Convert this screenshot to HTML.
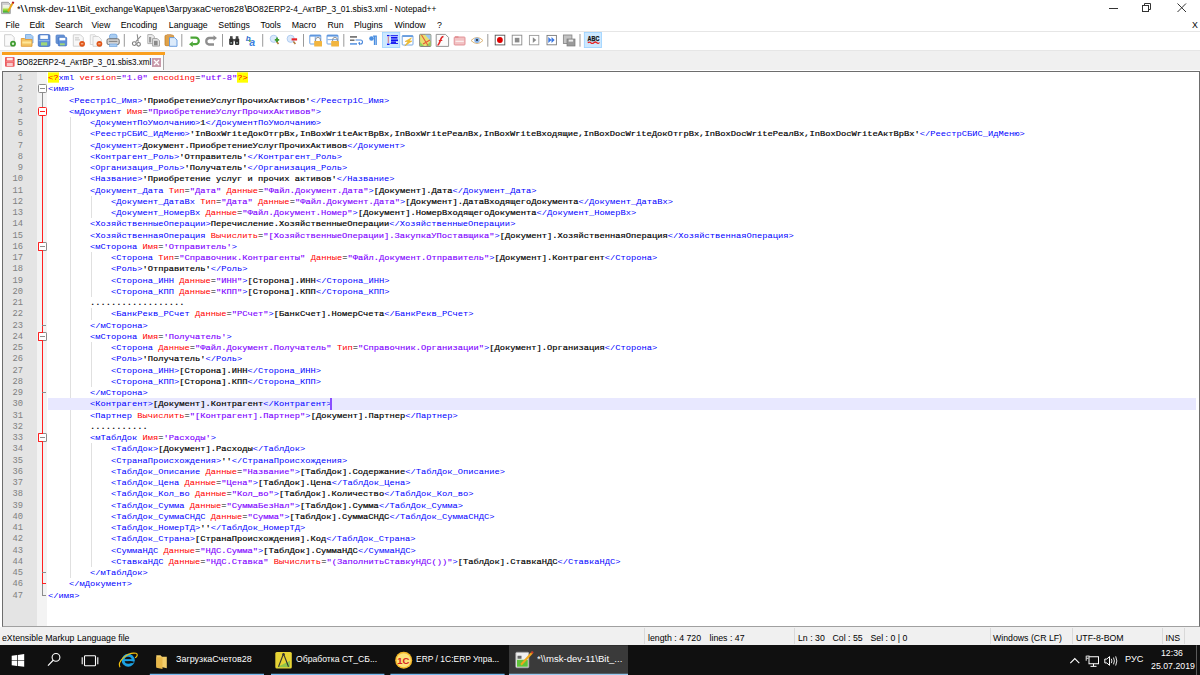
<!DOCTYPE html>
<html><head><meta charset="utf-8">
<style>
*{margin:0;padding:0;box-sizing:border-box}
html,body{width:1200px;height:675px;overflow:hidden;background:#fff;position:relative;font-family:"Liberation Sans",sans-serif;color:#000}
.abs{position:absolute}
.t{position:absolute;white-space:pre;line-height:0;font-size:8.75px}
.ttl{top:8.6px;font-size:8.85px}
.bs{display:inline-block;font-weight:normal;width:3.75px;text-align:center;transform:scaleX(1.3)}
.menu{top:24.5px}
#tb{position:absolute;left:0;top:31px;width:1200px;height:20px;background:#fff;border-top:1px solid #e6e6e6;border-bottom:1px solid #e6e6e6}
#tabbar{position:absolute;left:0;top:51px;width:1200px;height:18.6px;background:#f0f0f0}
#tab{position:absolute;left:1.5px;top:1.25px;width:162.5px;height:17.4px;background:#fcfcfc;border-right:1px solid #a8a8a8}
#tab .or{position:absolute;left:0;top:0;width:163px;height:3px;background:#fa9f1e}
#editor{position:absolute;left:2px;top:71px;width:1198px;height:556px;background:#fff;border:1px solid #6d6d6d;border-bottom-color:#a0a0a0;overflow:hidden}
#gut{position:absolute;left:0;top:0;width:33.6px;height:100%;background:#e4e4e4}
#fold{position:absolute;left:33.6px;top:0;width:10.6px;height:100%;background:#f3f3f3}
#code{position:absolute;left:-3px;top:-72px;width:1200px;height:700px}
.ln{position:absolute;left:48px;height:11.25px;width:1148px;white-space:pre;font-family:"Liberation Mono",monospace;font-size:8.75px;line-height:11.25px;padding-top:1.1px}
.ln i{font-style:normal}
.tx{display:inline-block;transform:scaleY(0.86);transform-origin:0 7.6px}
.cur{background:#e8e8ff}
.t_{color:#0000ff}
i.tg{color:#0000ff}
i.a{color:#ff0000}
i.v{color:#8000ff;-webkit-text-stroke:0.14px #8000ff}
i.d{color:#000;-webkit-text-stroke:0.2px #000}
i.eq{color:#000}
i.xs{color:#ff0000;background:#ffff00;display:inline-block;height:12.8px;margin-top:-2.5px;padding-top:2.5px;vertical-align:top}
.num{position:absolute;left:0;width:23px;padding-top:1.1px;text-align:right;font-family:"Liberation Mono",monospace;font-size:8.75px;line-height:11.25px;color:#808080}
.ig{position:absolute;width:1px;height:11.25px;background:#e0e0e0}
#status{position:absolute;left:0;top:627px;width:1200px;height:18px;background:#f0f0f0}
.st{top:10.7px;font-size:8.75px}
.sd{position:absolute;top:1px;width:1px;height:16px;background:#d9d9d9}
#task{position:absolute;left:0;top:644.5px;width:1200px;height:30.5px;background:#101010}
.tt{color:#fff}
.ul{position:absolute;top:28.5px;height:2px;background:#76b9ed}
</style></head><body>
<!-- title bar -->
<svg class="abs" style="left:0;top:0" width="16" height="16" viewBox="0 0 16 16">
<defs><linearGradient id="npg" x1="0" y1="0" x2="0" y2="1"><stop offset="0" stop-color="#f4f4f4"/><stop offset="0.35" stop-color="#e9f5d0"/><stop offset="0.6" stop-color="#9fdc3c"/><stop offset="1" stop-color="#2aa32a"/></linearGradient></defs>
<path d="M1.6 2.3 H8.3 L10.3 4.3 V13.6 H1.6 Z" fill="#d0d0d0" stroke="#9a9a9a" stroke-width="0.9"/>
<rect x="2.9" y="5" width="6.6" height="7.6" fill="url(#npg)"/>
<path d="M8 11.5 L12.8 3" stroke="#eaa51a" stroke-width="1.9"/>
<path d="M12.5 3.3 L13.6 1.9" stroke="#b0101a" stroke-width="1.9"/>
</svg>
<div class="t ttl" style="left:17.3px;transform:scaleX(1.045);transform-origin:0 0">*<span class="bs">\</span><span class="bs">\</span>msk-dev-11<span class="bs">\</span></div>
<div class="t ttl" style="left:80.0px;transform:scaleX(0.986);transform-origin:0 0">Bit_exchange<span class="bs">\</span></div>
<div class="t ttl" style="left:136.3px;transform:scaleX(0.983);transform-origin:0 0">Карцев<span class="bs">\</span></div>
<div class="t ttl" style="left:168.8px;transform:scaleX(1.003);transform-origin:0 0">ЗагрузкаСчетов28<span class="bs">\</span></div>
<div class="t ttl" style="left:247.2px;transform:scaleX(0.948);transform-origin:0 0">BO82ERP2-4_АктВР_3_01.sbis3.xml - Notepad++</div>
<div class="abs" style="left:1108.5px;top:7.5px;width:9px;height:1px;background:#333"></div>
<svg class="abs" style="left:1142px;top:3px" width="10" height="10" viewBox="0 0 10 10"><rect x="0.5" y="2.5" width="6" height="6" fill="none" stroke="#333" stroke-width="1"/><path d="M2.5 2.5 V0.5 H8.5 V6.5 H6.5" fill="none" stroke="#333" stroke-width="1"/></svg>
<svg class="abs" style="left:1176.5px;top:3px" width="10" height="10" viewBox="0 0 10 10"><path d="M0.5 0.5 L9 9 M9 0.5 L0.5 9" stroke="#333" stroke-width="1"/></svg>
<!-- menu -->
<div class="t menu" style="left:5.5px">File</div>
<div class="t menu" style="left:29.4px">Edit</div>
<div class="t menu" style="left:55px">Search</div>
<div class="t menu" style="left:91.4px">View</div>
<div class="t menu" style="left:120.7px">Encoding</div>
<div class="t menu" style="left:168.8px">Language</div>
<div class="t menu" style="left:218.3px">Settings</div>
<div class="t menu" style="left:260.5px">Tools</div>
<div class="t menu" style="left:291.7px">Macro</div>
<div class="t menu" style="left:327.5px">Run</div>
<div class="t menu" style="left:354px">Plugins</div>
<div class="t menu" style="left:394.5px">Window</div>
<div class="t menu" style="left:437px">?</div>
<div class="t menu" style="left:1192px">X</div>
<!-- toolbar -->
<div id="tb"></div>
<!--ICONS-->
<svg class="abs" style="left:0;top:0" width="610" height="51" viewBox="0 0 610 51">
<!-- new -->
<path d="M4.6 34.7 H11.5 L14.2 37.4 V46.2 H4.6 Z" fill="#fafafa" stroke="#cfcfcf" stroke-width="1"/>
<circle cx="13" cy="43.7" r="2.9" fill="#3c9a2e"/><circle cx="13" cy="43.7" r="1.2" fill="#d8f0d0"/>
<!-- open -->
<path d="M25.5 34.5 H31 L33 36.5 V43 H25.5 Z" fill="#a9cdf2" stroke="#6fa3e0" stroke-width="0.8"/>
<path d="M21.3 38.5 H24.5 L25.5 39.5 H32 V46.3 H21.3 Z" fill="#f3c462" stroke="#e09a38" stroke-width="0.9"/>
<rect x="22.3" y="41.5" width="9" height="2" fill="#ffe79a"/>
<!-- save -->
<rect x="38.3" y="34.6" width="11.6" height="11.8" rx="1.2" fill="#5b8ed8" stroke="#3f6fc0" stroke-width="0.8"/>
<rect x="40.3" y="35.3" width="7.6" height="3.6" fill="#ffffff"/>
<rect x="41" y="42.3" width="6.2" height="3.2" fill="#9fd67a"/>
<rect x="38.8" y="40" width="10.6" height="1.2" fill="#8fb5ea"/>
<!-- save all -->
<rect x="56" y="35" width="8.5" height="8.5" rx="1" fill="#6d98d8" stroke="#4f7cc4" stroke-width="0.7"/>
<rect x="58.2" y="37.2" width="8.5" height="8.7" rx="1" fill="#5b8ed8" stroke="#3f6fc0" stroke-width="0.7"/>
<rect x="59.5" y="37.8" width="5.8" height="2.6" fill="#fff"/>
<rect x="60" y="43.3" width="4.8" height="2" fill="#9fd67a"/>
<!-- close -->
<path d="M73.3 34.8 H80.5 L83.3 37.6 V46.2 H73.3 Z" fill="#f7f7f7" stroke="#d0d0d0" stroke-width="1"/>
<rect x="75" y="37.5" width="4" height="0.8" fill="#bbb"/><rect x="75" y="39.5" width="5" height="0.8" fill="#bbb"/>
<circle cx="82.1" cy="43.8" r="2.9" fill="#e0561a"/><rect x="80.9" y="43.4" width="2.4" height="0.9" fill="#fde0c8"/>
<!-- close all -->
<path d="M90.3 34.8 H95 L97 36.8 V44.5 H90.3 Z" fill="#f7f7f7" stroke="#d4d4d4" stroke-width="0.9"/>
<path d="M93 36.5 H98.5 L101.3 39.3 V46.3 H93 Z" fill="#f7f7f7" stroke="#d0d0d0" stroke-width="0.9"/>
<circle cx="99.4" cy="43.8" r="2.9" fill="#e0561a"/><rect x="98.2" y="43.4" width="2.4" height="0.9" fill="#fde0c8"/>
<!-- print -->
<rect x="109.5" y="34.2" width="7.5" height="5" rx="2" fill="#a9cdf2" stroke="#6fa3e0" stroke-width="0.8"/>
<rect x="107" y="38.8" width="12.2" height="5.7" rx="1.5" fill="#d9d9d9" stroke="#606060" stroke-width="0.9"/>
<rect x="108.8" y="40.8" width="8.6" height="1.3" fill="#8a8a8a"/>
<rect x="109.5" y="44" width="7.5" height="2.5" fill="#a9cdf2" stroke="#6fa3e0" stroke-width="0.7"/>
<!-- separators -->
<g fill="#9a9a9a">
<rect x="123.8" y="34" width="1" height="12.7"/>
<rect x="181.3" y="34" width="1" height="12.7"/>
<rect x="222" y="34" width="1" height="12.7"/>
<rect x="262.2" y="34" width="1" height="12.7"/>
<rect x="303" y="34" width="1" height="12.7"/>
<rect x="343.3" y="34" width="1" height="12.7"/>
<rect x="487.3" y="34" width="1" height="12.7"/>
<rect x="579.5" y="34" width="1" height="12.7"/>
</g>
<!-- cut -->
<path d="M137.2 34.3 L138.2 41.8 M141 36 L135.8 41.6" stroke="#8a8a8a" stroke-width="1.1" fill="none"/>
<circle cx="134.3" cy="43.6" r="1.9" fill="none" stroke="#7a7a7a" stroke-width="1.1"/>
<circle cx="138.6" cy="44.3" r="1.8" fill="none" stroke="#7a7a7a" stroke-width="1.1"/>
<!-- copy -->
<path d="M147.8 34.6 H152.3 L154.3 36.6 V43.6 H147.8 Z" fill="#ececec" stroke="#a8a8a8" stroke-width="0.9"/>
<rect x="149" y="37" width="2.2" height="5.5" fill="#9a9a9a"/>
<path d="M152.6 38.6 H157.3 L159.5 40.8 V46.1 H152.6 Z" fill="#e4e4e4" stroke="#9c9c9c" stroke-width="0.9"/>
<rect x="154" y="40.8" width="3.6" height="4.5" fill="#8a8a8a"/>
<!-- paste -->
<rect x="165" y="35.2" width="8.6" height="10.5" rx="1" fill="#e0a248" stroke="#c07f2a" stroke-width="0.8"/>
<rect x="167" y="34.2" width="4.5" height="2" fill="#d6a060"/>
<path d="M169.5 37.6 H174.5 L177 40 V46.3 H169.5 Z" fill="#dcebfb" stroke="#5f97df" stroke-width="0.9"/>
<!-- undo -->
<path d="M190.5 37.6 H195.5 A3.3 3.3 0 0 1 195.5 44.2 H192.5" fill="none" stroke="#4aa536" stroke-width="2.2"/>
<path d="M189 44.2 L192.8 41.3 V47 Z" fill="#4aa536"/>
<!-- redo -->
<path d="M214 38 H209 A3.3 3.3 0 0 0 209 44.5 H214" fill="none" stroke="#8e8e8e" stroke-width="2.3"/>
<path d="M217 38 L213.5 35.3 V40.7 Z" fill="#8e8e8e"/>
<!-- find -->
<rect x="229.2" y="38.5" width="4.2" height="6.4" rx="0.8" fill="#2f2f2f"/>
<rect x="235" y="38.5" width="4.2" height="6.4" rx="0.8" fill="#2f2f2f"/>
<rect x="230" y="36.2" width="2.6" height="3" fill="#444"/><rect x="235.8" y="36.2" width="2.6" height="3" fill="#444"/>
<rect x="233" y="39" width="2.3" height="2.3" fill="#555"/>
<rect x="230.5" y="42" width="1.5" height="1.6" fill="#9aa"/><rect x="236.3" y="42" width="1.5" height="1.6" fill="#9aa"/>
<!-- replace -->
<text x="245.8" y="40.6" font-family="Liberation Sans" font-style="italic" font-weight="bold" font-size="8" fill="#2f6fd0">b</text>
<text x="249.2" y="46.4" font-family="Liberation Sans" font-style="italic" font-weight="bold" font-size="10.5" fill="#3a80e0">a</text>
<circle cx="249.8" cy="40.8" r="1.1" fill="#5cae4a"/>
<!-- zoom in -->
<circle cx="273.8" cy="38.8" r="3.6" fill="#dbe9fb" stroke="#a9c8ef" stroke-width="0.9"/>
<path d="M276.5 41.5 L278.5 44" stroke="#b07a3e" stroke-width="1.6"/>
<path d="M277 37.5 V42 M274.8 39.8 H279.2" stroke="#3d9a2e" stroke-width="1.8"/>
<!-- zoom out -->
<circle cx="290.7" cy="38.8" r="3.6" fill="#dbe9fb" stroke="#a9c8ef" stroke-width="0.9"/>
<path d="M293.4 41.5 L295.4 44" stroke="#b07a3e" stroke-width="1.6"/>
<rect x="291.6" y="38.3" width="5.5" height="2.2" fill="#e8242a"/>
<!-- sync v -->
<rect x="309.8" y="35" width="11" height="9" rx="0.8" fill="#fff" stroke="#5f97df" stroke-width="0.9"/>
<rect x="309.8" y="35" width="11" height="1.6" fill="#5f97df"/>
<rect x="314.8" y="36.5" width="0.8" height="7" fill="#5f97df"/>
<path d="M315.6 41 V39.8 A2.4 2.4 0 0 1 320.4 39.8 V41" fill="none" stroke="#888" stroke-width="0.9"/>
<rect x="314.2" y="41" width="7.8" height="5.5" rx="0.5" fill="#f2b53f"/>
<!-- sync h -->
<rect x="327" y="35" width="11" height="9" rx="0.8" fill="#fff" stroke="#5f97df" stroke-width="0.9"/>
<rect x="327" y="35" width="11" height="1.6" fill="#5f97df"/>
<rect x="327.5" y="39.3" width="10" height="0.8" fill="#5f97df"/>
<path d="M332.6 41 V39.8 A2.4 2.4 0 0 1 337.4 39.8 V41" fill="none" stroke="#888" stroke-width="0.9"/>
<rect x="331.2" y="41" width="7.8" height="5.5" rx="0.5" fill="#f2b53f"/>
<!-- word wrap -->
<rect x="350" y="36" width="7" height="1.8" fill="#7a7a7a"/>
<rect x="350" y="39.6" width="4.5" height="1.1" fill="#3a3a3a"/>
<rect x="350" y="43" width="7" height="1.8" fill="#6fa3e6"/>
<path d="M355.5 40 H360.5 A2 2 0 0 1 360.5 44 H359" fill="none" stroke="#4a88dc" stroke-width="1.1"/>
<path d="M358 43 L360 45.5 L360 41.8 Z" fill="#4a88dc"/>
<!-- pilcrow -->
<path d="M373 36.2 H376.2 V45 M374.5 36.2 V45" stroke="#4a8ee0" stroke-width="1.3" fill="none"/>
<circle cx="371.5" cy="38.5" r="2.3" fill="#4a8ee0"/>
<!-- pressed indent guide -->
<rect x="382.5" y="32.3" width="17.3" height="15.2" fill="#cce8ff" stroke="#99d1ff" stroke-width="0.8"/>
<g fill="#1010f0">
<rect x="387" y="35" width="2.5" height="1.2"/><rect x="390.5" y="35.2" width="7.5" height="1"/>
<rect x="391" y="37" width="6.5" height="1.6"/><rect x="391" y="39.4" width="7" height="1.8"/>
<rect x="391" y="41.5" width="5" height="1.4"/><rect x="390.5" y="43" width="7.5" height="0.9"/>
<rect x="387" y="43.6" width="2.5" height="1.4"/>
</g>
<rect x="387.8" y="36.5" width="0.9" height="6.5" fill="#e06070"/>
<!-- udl -->
<rect x="402.2" y="35.5" width="10.8" height="9.5" rx="0.8" fill="#fff" stroke="#6a9edf" stroke-width="0.9"/>
<rect x="402.2" y="35.5" width="10.8" height="1.5" fill="#6a9edf"/>
<path d="M411.5 37.8 L405 41.5 H408 L404.8 46 L412 41 H409.3 L411.5 37.8 Z" fill="#f0c030" stroke="#e0a820" stroke-width="0.5"/>
<!-- doc map -->
<rect x="419.6" y="34.3" width="11.3" height="12.2" rx="0.8" fill="#e8e070" stroke="#7a7a7a" stroke-width="0.9"/>
<path d="M425 34.8 H430.5 V41 Z" fill="#9cc8f0"/>
<path d="M420 42 L424 46 H420 Z M426 46 L430.5 41.5 V46 Z" fill="#8fd060"/>
<path d="M421.5 35 L428 45.5 M423 44 L430 40" fill="none" stroke="#e45a3a" stroke-width="1.1"/>
<!-- function list -->
<path d="M436.2 34.4 H445.5 L448.6 37.5 V46.4 H436.2 Z" fill="#fbfbfb" stroke="#8a8a8a" stroke-width="0.9"/>
<path d="M437.5 45.2 C439 45 439.5 43 440.5 40 C441.3 37.5 442 36.5 443.5 36.5" fill="none" stroke="#e02828" stroke-width="1.6"/>
<path d="M438.8 40.5 H442.3" stroke="#e02828" stroke-width="1"/>
<!-- folder workspace -->
<rect x="454.2" y="37" width="10.8" height="8" rx="0.8" fill="#f2c2c4" stroke="#e08a8e" stroke-width="0.9"/>
<rect x="455" y="36.3" width="3.5" height="1.5" fill="#e08a8e"/>
<rect x="455.5" y="40.8" width="8.3" height="0.9" fill="#fff"/>
<!-- eye -->
<path d="M471 40.5 Q477 34.5 483 40.5 Q477 46.5 471 40.5 Z" fill="#fff" stroke="#d8b070" stroke-width="0.9"/>
<circle cx="477" cy="40.2" r="2.7" fill="#8ab4e8"/>
<circle cx="477" cy="40" r="0.9" fill="#111"/>
<!-- record -->
<rect x="495.2" y="35.2" width="9.6" height="9.7" fill="#fff" stroke="#555" stroke-width="0.9"/>
<circle cx="499.9" cy="40" r="2.9" fill="#dd0000"/>
<!-- stop -->
<rect x="512.2" y="35.2" width="9.6" height="9.7" fill="#fff" stroke="#8a8a8a" stroke-width="0.9"/>
<rect x="514.8" y="37.8" width="4.6" height="4.6" fill="#8a8a8a"/>
<!-- play -->
<rect x="529.4" y="35.4" width="9.4" height="9.4" fill="#fff" stroke="#9a9a9a" stroke-width="0.9"/>
<path d="M532.8 37.3 L536.3 40.1 L532.8 42.9 Z" fill="#8a8a8a"/>
<!-- ff -->
<rect x="547" y="35.4" width="9.4" height="9.4" fill="#fff" stroke="#7a7a7a" stroke-width="0.9"/>
<path d="M548.3 37 L551.5 40 L548.3 43 Z M551.5 37 L554.7 40 L551.5 43 Z" fill="#3b78e2"/>
<!-- save macro -->
<rect x="563.4" y="35" width="8.5" height="8.5" fill="#c4c4c4" stroke="#8a8a8a" stroke-width="0.9"/>
<rect x="567" y="39" width="8" height="7" fill="#9a9a9a" stroke="#7a7a7a" stroke-width="0.7"/>
<rect x="568.7" y="39.6" width="4.4" height="2" fill="#ececec"/>
<!-- spell -->
<rect x="584.3" y="32.4" width="17.2" height="15.2" fill="#cce8ff" stroke="#99d1ff" stroke-width="0.8"/>
<text x="587.6" y="41.2" font-family="Liberation Sans" font-weight="bold" font-size="6.6" fill="#111" stroke="#111" stroke-width="0.25" textLength="11.8" lengthAdjust="spacingAndGlyphs">ABC</text>
<path d="M587.8 42.8 Q589.3 41.3 590.8 42.7 T593.8 42.7 T596.8 42.7 T599.5 42.5" fill="none" stroke="#e82020" stroke-width="1.2"/>
</svg>
<!--/ICONS-->
<!-- tab bar -->
<div id="tabbar"><div id="tab"><div class="or"></div>
<svg class="abs" style="left:3px;top:4.75px" width="10" height="10" viewBox="0 0 10 10"><rect x="0" y="0" width="9.6" height="9.8" rx="1" fill="#ec5a5e"/><rect x="1.8" y="0.8" width="6" height="2.6" fill="#fde8e8"/><rect x="1.8" y="5.8" width="6" height="3.2" fill="#f9c9ca"/><rect x="0.8" y="4.2" width="8" height="0.9" fill="#f58a8d"/></svg>
<div class="t" style="left:15.5px;top:9.8px;font-size:9.6px;transform:scaleX(0.835);transform-origin:0 0">BO82ERP2-4_АктВР_3_01.sbis3.xml</div>
<svg class="abs" style="left:150.5px;top:5.5px" width="9" height="9" viewBox="0 0 9 9"><rect x="0" y="0" width="9" height="9" fill="#c99aaa"/><path d="M2 2 L7 7 M7 2 L2 7" stroke="#fff" stroke-width="1.3"/></svg>
</div></div>
<!-- editor -->
<div id="editor">
<div id="gut"></div>
<div id="fold"></div>
<div id="code">
<div class="ig" style="left:70.00px;top:117.00px"></div>
<div class="ig" style="left:70.00px;top:128.25px"></div>
<div class="ig" style="left:70.00px;top:139.50px"></div>
<div class="ig" style="left:70.00px;top:150.75px"></div>
<div class="ig" style="left:70.00px;top:162.00px"></div>
<div class="ig" style="left:70.00px;top:173.25px"></div>
<div class="ig" style="left:70.00px;top:184.50px"></div>
<div class="ig" style="left:70.00px;top:195.75px"></div>
<div class="ig" style="left:91.00px;top:195.75px"></div>
<div class="ig" style="left:70.00px;top:207.00px"></div>
<div class="ig" style="left:91.00px;top:207.00px"></div>
<div class="ig" style="left:70.00px;top:218.25px"></div>
<div class="ig" style="left:70.00px;top:229.50px"></div>
<div class="ig" style="left:70.00px;top:240.75px"></div>
<div class="ig" style="left:70.00px;top:252.00px"></div>
<div class="ig" style="left:91.00px;top:252.00px"></div>
<div class="ig" style="left:70.00px;top:263.25px"></div>
<div class="ig" style="left:91.00px;top:263.25px"></div>
<div class="ig" style="left:70.00px;top:274.50px"></div>
<div class="ig" style="left:91.00px;top:274.50px"></div>
<div class="ig" style="left:70.00px;top:285.75px"></div>
<div class="ig" style="left:91.00px;top:285.75px"></div>
<div class="ig" style="left:70.00px;top:297.00px"></div>
<div class="ig" style="left:70.00px;top:308.25px"></div>
<div class="ig" style="left:91.00px;top:308.25px"></div>
<div class="ig" style="left:70.00px;top:319.50px"></div>
<div class="ig" style="left:70.00px;top:330.75px"></div>
<div class="ig" style="left:70.00px;top:342.00px"></div>
<div class="ig" style="left:91.00px;top:342.00px"></div>
<div class="ig" style="left:70.00px;top:353.25px"></div>
<div class="ig" style="left:91.00px;top:353.25px"></div>
<div class="ig" style="left:70.00px;top:364.50px"></div>
<div class="ig" style="left:91.00px;top:364.50px"></div>
<div class="ig" style="left:70.00px;top:375.75px"></div>
<div class="ig" style="left:91.00px;top:375.75px"></div>
<div class="ig" style="left:70.00px;top:387.00px"></div>
<div class="ig" style="left:70.00px;top:398.25px"></div>
<div class="ig" style="left:70.00px;top:409.50px"></div>
<div class="ig" style="left:70.00px;top:420.75px"></div>
<div class="ig" style="left:70.00px;top:432.00px"></div>
<div class="ig" style="left:70.00px;top:443.25px"></div>
<div class="ig" style="left:91.00px;top:443.25px"></div>
<div class="ig" style="left:70.00px;top:454.50px"></div>
<div class="ig" style="left:91.00px;top:454.50px"></div>
<div class="ig" style="left:70.00px;top:465.75px"></div>
<div class="ig" style="left:91.00px;top:465.75px"></div>
<div class="ig" style="left:70.00px;top:477.00px"></div>
<div class="ig" style="left:91.00px;top:477.00px"></div>
<div class="ig" style="left:70.00px;top:488.25px"></div>
<div class="ig" style="left:91.00px;top:488.25px"></div>
<div class="ig" style="left:70.00px;top:499.50px"></div>
<div class="ig" style="left:91.00px;top:499.50px"></div>
<div class="ig" style="left:70.00px;top:510.75px"></div>
<div class="ig" style="left:91.00px;top:510.75px"></div>
<div class="ig" style="left:70.00px;top:522.00px"></div>
<div class="ig" style="left:91.00px;top:522.00px"></div>
<div class="ig" style="left:70.00px;top:533.25px"></div>
<div class="ig" style="left:91.00px;top:533.25px"></div>
<div class="ig" style="left:70.00px;top:544.50px"></div>
<div class="ig" style="left:91.00px;top:544.50px"></div>
<div class="ig" style="left:70.00px;top:555.75px"></div>
<div class="ig" style="left:91.00px;top:555.75px"></div>
<div class="ig" style="left:70.00px;top:567.00px"></div>
<div class="num" style="top:72.00px">1</div>
<div class="num" style="top:83.25px">2</div>
<div class="num" style="top:94.50px">3</div>
<div class="num" style="top:105.75px">4</div>
<div class="num" style="top:117.00px">5</div>
<div class="num" style="top:128.25px">6</div>
<div class="num" style="top:139.50px">7</div>
<div class="num" style="top:150.75px">8</div>
<div class="num" style="top:162.00px">9</div>
<div class="num" style="top:173.25px">10</div>
<div class="num" style="top:184.50px">11</div>
<div class="num" style="top:195.75px">12</div>
<div class="num" style="top:207.00px">13</div>
<div class="num" style="top:218.25px">14</div>
<div class="num" style="top:229.50px">15</div>
<div class="num" style="top:240.75px">16</div>
<div class="num" style="top:252.00px">17</div>
<div class="num" style="top:263.25px">18</div>
<div class="num" style="top:274.50px">19</div>
<div class="num" style="top:285.75px">20</div>
<div class="num" style="top:297.00px">21</div>
<div class="num" style="top:308.25px">22</div>
<div class="num" style="top:319.50px">23</div>
<div class="num" style="top:330.75px">24</div>
<div class="num" style="top:342.00px">25</div>
<div class="num" style="top:353.25px">26</div>
<div class="num" style="top:364.50px">27</div>
<div class="num" style="top:375.75px">28</div>
<div class="num" style="top:387.00px">29</div>
<div class="num" style="top:398.25px">30</div>
<div class="num" style="top:409.50px">31</div>
<div class="num" style="top:420.75px">32</div>
<div class="num" style="top:432.00px">33</div>
<div class="num" style="top:443.25px">34</div>
<div class="num" style="top:454.50px">35</div>
<div class="num" style="top:465.75px">36</div>
<div class="num" style="top:477.00px">37</div>
<div class="num" style="top:488.25px">38</div>
<div class="num" style="top:499.50px">39</div>
<div class="num" style="top:510.75px">40</div>
<div class="num" style="top:522.00px">41</div>
<div class="num" style="top:533.25px">42</div>
<div class="num" style="top:544.50px">43</div>
<div class="num" style="top:555.75px">44</div>
<div class="num" style="top:567.00px">45</div>
<div class="num" style="top:578.25px">46</div>
<div class="num" style="top:589.50px">47</div>
<div class="abs" style="left:41.90px;top:93.38px;width:1px;height:13.50px;background:#8c8c8c"></div>
<div class="abs" style="left:41.90px;top:115.88px;width:1px;height:468.50px;background:#ff2020"></div>
<div class="abs" style="left:41.90px;top:583.88px;width:1px;height:11.75px;background:#8c8c8c"></div>
<div class="abs" style="left:41.90px;top:594.62px;width:4.5px;height:1px;background:#8c8c8c"></div>
<div class="abs" style="left:41.90px;top:583.38px;width:4.5px;height:1px;background:#ff2020"></div>
<div class="abs" style="left:41.90px;top:324.62px;width:4.5px;height:1px;background:#8c8c8c"></div>
<div class="abs" style="left:41.90px;top:392.12px;width:4.5px;height:1px;background:#8c8c8c"></div>
<div class="abs" style="left:41.90px;top:572.12px;width:4.5px;height:1px;background:#8c8c8c"></div>
<div class="abs" style="left:38px;top:84.38px;width:8.8px;height:9px;background:#fff;border-radius:1.5px;border:1px solid #8c8c8c;border-left-color:#8c8c8c;"></div>
<div class="abs" style="left:40px;top:88.38px;width:4.8px;height:1px;background:#8c8c8c"></div>
<div class="abs" style="left:38px;top:106.88px;width:8.8px;height:9px;background:#fff;border-radius:1.5px;border:1px solid #ff2020;border-left-color:#ff2020;"></div>
<div class="abs" style="left:40px;top:110.88px;width:4.8px;height:1px;background:#ff2020"></div>
<div class="abs" style="left:38px;top:241.88px;width:8.8px;height:9px;background:#fff;border-radius:1.5px;border:1px solid #8c8c8c;border-left-color:#ff2020;"></div>
<div class="abs" style="left:38px;top:241.88px;width:4.9px;height:9px;border-radius:1.5px 0 0 1.5px;border:1px solid #ff2020;border-right:none"></div>
<div class="abs" style="left:40px;top:245.88px;width:4.8px;height:1px;background:#8c8c8c"></div>
<div class="abs" style="left:38px;top:331.88px;width:8.8px;height:9px;background:#fff;border-radius:1.5px;border:1px solid #8c8c8c;border-left-color:#ff2020;"></div>
<div class="abs" style="left:38px;top:331.88px;width:4.9px;height:9px;border-radius:1.5px 0 0 1.5px;border:1px solid #ff2020;border-right:none"></div>
<div class="abs" style="left:40px;top:335.88px;width:4.8px;height:1px;background:#8c8c8c"></div>
<div class="abs" style="left:38px;top:433.12px;width:8.8px;height:9px;background:#fff;border-radius:1.5px;border:1px solid #8c8c8c;border-left-color:#ff2020;"></div>
<div class="abs" style="left:38px;top:433.12px;width:4.9px;height:9px;border-radius:1.5px 0 0 1.5px;border:1px solid #ff2020;border-right:none"></div>
<div class="abs" style="left:40px;top:437.12px;width:4.8px;height:1px;background:#8c8c8c"></div>
<div class="ln" style="top:72.00px"><span class="tx"><i class="xs">&lt;?</i><i class="tg">xml</i> <i class="a">version</i><i class="eq">=</i><i class="v">"1.0"</i> <i class="a">encoding</i><i class="eq">=</i><i class="v">"utf-8"</i><i class="xs">?&gt;</i></span></div>
<div class="ln" style="top:83.25px"><span class="tx"><i class="tg">&lt;имя</i><i class="tg">&gt;</i></span></div>
<div class="ln" style="top:94.50px"><span class="tx">    <i class="tg">&lt;Реестр1С_Имя</i><i class="tg">&gt;</i><i class="d">'ПриобретениеУслугПрочихАктивов'</i><i class="tg">&lt;/Реестр1С_Имя</i><i class="tg">&gt;</i></span></div>
<div class="ln" style="top:105.75px"><span class="tx">    <i class="tg">&lt;мДокумент</i> <i class="a">Имя</i><i class="eq">=</i><i class="v">"ПриобретениеУслугПрочихАктивов"</i><i class="tg">&gt;</i></span></div>
<div class="ln" style="top:117.00px"><span class="tx">        <i class="tg">&lt;ДокументПоУмолчанию</i><i class="tg">&gt;</i><i class="d">1</i><i class="tg">&lt;/ДокументПоУмолчанию</i><i class="tg">&gt;</i></span></div>
<div class="ln" style="top:128.25px"><span class="tx">        <i class="tg">&lt;РеестрСБИС_ИдМеню</i><i class="tg">&gt;</i><i class="d">'InBoxWriteДокОтгрВх,InBoxWriteАктВрВх,InBoxWriteРеалВх,InBoxWriteВходящие,InBoxDocWriteДокОтгрВх,InBoxDocWriteРеалВх,InBoxDocWriteАктВрВх'</i><i class="tg">&lt;/РеестрСБИС_ИдМеню</i><i class="tg">&gt;</i></span></div>
<div class="ln" style="top:139.50px"><span class="tx">        <i class="tg">&lt;Документ</i><i class="tg">&gt;</i><i class="d">Документ.ПриобретениеУслугПрочихАктивов</i><i class="tg">&lt;/Документ</i><i class="tg">&gt;</i></span></div>
<div class="ln" style="top:150.75px"><span class="tx">        <i class="tg">&lt;Контрагент_Роль</i><i class="tg">&gt;</i><i class="d">'Отправитель'</i><i class="tg">&lt;/Контрагент_Роль</i><i class="tg">&gt;</i></span></div>
<div class="ln" style="top:162.00px"><span class="tx">        <i class="tg">&lt;Организация_Роль</i><i class="tg">&gt;</i><i class="d">'Получатель'</i><i class="tg">&lt;/Организация_Роль</i><i class="tg">&gt;</i></span></div>
<div class="ln" style="top:173.25px"><span class="tx">        <i class="tg">&lt;Название</i><i class="tg">&gt;</i><i class="d">'Приобретение услуг и прочих активов'</i><i class="tg">&lt;/Название</i><i class="tg">&gt;</i></span></div>
<div class="ln" style="top:184.50px"><span class="tx">        <i class="tg">&lt;Документ_Дата</i> <i class="a">Тип</i><i class="eq">=</i><i class="v">"Дата"</i> <i class="a">Данные</i><i class="eq">=</i><i class="v">"Файл.Документ.Дата"</i><i class="tg">&gt;</i><i class="d">[Документ].Дата</i><i class="tg">&lt;/Документ_Дата</i><i class="tg">&gt;</i></span></div>
<div class="ln" style="top:195.75px"><span class="tx">            <i class="tg">&lt;Документ_ДатаВх</i> <i class="a">Тип</i><i class="eq">=</i><i class="v">"Дата"</i> <i class="a">Данные</i><i class="eq">=</i><i class="v">"Файл.Документ.Дата"</i><i class="tg">&gt;</i><i class="d">[Документ].ДатаВходящегоДокумента</i><i class="tg">&lt;/Документ_ДатаВх</i><i class="tg">&gt;</i></span></div>
<div class="ln" style="top:207.00px"><span class="tx">            <i class="tg">&lt;Документ_НомерВх</i> <i class="a">Данные</i><i class="eq">=</i><i class="v">"Файл.Документ.Номер"</i><i class="tg">&gt;</i><i class="d">[Документ].НомерВходящегоДокумента</i><i class="tg">&lt;/Документ_НомерВх</i><i class="tg">&gt;</i></span></div>
<div class="ln" style="top:218.25px"><span class="tx">        <i class="tg">&lt;ХозяйственныеОперации</i><i class="tg">&gt;</i><i class="d">Перечисление.ХозяйственныеОперации</i><i class="tg">&lt;/ХозяйственныеОперации</i><i class="tg">&gt;</i></span></div>
<div class="ln" style="top:229.50px"><span class="tx">        <i class="tg">&lt;ХозяйственнаяОперация</i> <i class="a">Вычислить</i><i class="eq">=</i><i class="v">"[ХозяйственныеОперации].ЗакупкаУПоставщика"</i><i class="tg">&gt;</i><i class="d">[Документ].ХозяйственнаяОперация</i><i class="tg">&lt;/ХозяйственнаяОперация</i><i class="tg">&gt;</i></span></div>
<div class="ln" style="top:240.75px"><span class="tx">        <i class="tg">&lt;мСторона</i> <i class="a">Имя</i><i class="eq">=</i><i class="v">'Отправитель'</i><i class="tg">&gt;</i></span></div>
<div class="ln" style="top:252.00px"><span class="tx">            <i class="tg">&lt;Сторона</i> <i class="a">Тип</i><i class="eq">=</i><i class="v">"Справочник.Контрагенты"</i> <i class="a">Данные</i><i class="eq">=</i><i class="v">"Файл.Документ.Отправитель"</i><i class="tg">&gt;</i><i class="d">[Документ].Контрагент</i><i class="tg">&lt;/Сторона</i><i class="tg">&gt;</i></span></div>
<div class="ln" style="top:263.25px"><span class="tx">            <i class="tg">&lt;Роль</i><i class="tg">&gt;</i><i class="d">'Отправитель'</i><i class="tg">&lt;/Роль</i><i class="tg">&gt;</i></span></div>
<div class="ln" style="top:274.50px"><span class="tx">            <i class="tg">&lt;Сторона_ИНН</i> <i class="a">Данные</i><i class="eq">=</i><i class="v">"ИНН"</i><i class="tg">&gt;</i><i class="d">[Сторона].ИНН</i><i class="tg">&lt;/Сторона_ИНН</i><i class="tg">&gt;</i></span></div>
<div class="ln" style="top:285.75px"><span class="tx">            <i class="tg">&lt;Сторона_КПП</i> <i class="a">Данные</i><i class="eq">=</i><i class="v">"КПП"</i><i class="tg">&gt;</i><i class="d">[Сторона].КПП</i><i class="tg">&lt;/Сторона_КПП</i><i class="tg">&gt;</i></span></div>
<div class="ln" style="top:297.00px"><span class="tx">        <i class="d">..................</i></span></div>
<div class="ln" style="top:308.25px"><span class="tx">            <i class="tg">&lt;БанкРекв_РСчет</i> <i class="a">Данные</i><i class="eq">=</i><i class="v">"РСчет"</i><i class="tg">&gt;</i><i class="d">[БанкСчет].НомерСчета</i><i class="tg">&lt;/БанкРекв_РСчет</i><i class="tg">&gt;</i></span></div>
<div class="ln" style="top:319.50px"><span class="tx">        <i class="tg">&lt;/мСторона</i><i class="tg">&gt;</i></span></div>
<div class="ln" style="top:330.75px"><span class="tx">        <i class="tg">&lt;мСторона</i> <i class="a">Имя</i><i class="eq">=</i><i class="v">'Получатель'</i><i class="tg">&gt;</i></span></div>
<div class="ln" style="top:342.00px"><span class="tx">            <i class="tg">&lt;Сторона</i> <i class="a">Данные</i><i class="eq">=</i><i class="v">"Файл.Документ.Получатель"</i> <i class="a">Тип</i><i class="eq">=</i><i class="v">"Справочник.Организации"</i><i class="tg">&gt;</i><i class="d">[Документ].Организация</i><i class="tg">&lt;/Сторона</i><i class="tg">&gt;</i></span></div>
<div class="ln" style="top:353.25px"><span class="tx">            <i class="tg">&lt;Роль</i><i class="tg">&gt;</i><i class="d">'Получатель'</i><i class="tg">&lt;/Роль</i><i class="tg">&gt;</i></span></div>
<div class="ln" style="top:364.50px"><span class="tx">            <i class="tg">&lt;Сторона_ИНН</i><i class="tg">&gt;</i><i class="d">[Сторона].ИНН</i><i class="tg">&lt;/Сторона_ИНН</i><i class="tg">&gt;</i></span></div>
<div class="ln" style="top:375.75px"><span class="tx">            <i class="tg">&lt;Сторона_КПП</i><i class="tg">&gt;</i><i class="d">[Сторона].КПП</i><i class="tg">&lt;/Сторона_КПП</i><i class="tg">&gt;</i></span></div>
<div class="ln" style="top:387.00px"><span class="tx">        <i class="tg">&lt;/мСторона</i><i class="tg">&gt;</i></span></div>
<div class="ln cur" style="top:398.25px"><span class="tx">        <i class="tg">&lt;Контрагент</i><i class="tg">&gt;</i><i class="d">[Документ].Контрагент</i><i class="tg">&lt;/Контрагент</i><i class="tg">&gt;</i></span></div>
<div class="ln" style="top:409.50px"><span class="tx">        <i class="tg">&lt;Партнер</i> <i class="a">Вычислить</i><i class="eq">=</i><i class="v">"[Контрагент].Партнер"</i><i class="tg">&gt;</i><i class="d">[Документ].Партнер</i><i class="tg">&lt;/Партнер</i><i class="tg">&gt;</i></span></div>
<div class="ln" style="top:420.75px"><span class="tx">        <i class="d">...........</i></span></div>
<div class="ln" style="top:432.00px"><span class="tx">        <i class="tg">&lt;мТаблДок</i> <i class="a">Имя</i><i class="eq">=</i><i class="v">'Расходы'</i><i class="tg">&gt;</i></span></div>
<div class="ln" style="top:443.25px"><span class="tx">            <i class="tg">&lt;ТаблДок</i><i class="tg">&gt;</i><i class="d">[Документ].Расходы</i><i class="tg">&lt;/ТаблДок</i><i class="tg">&gt;</i></span></div>
<div class="ln" style="top:454.50px"><span class="tx">            <i class="tg">&lt;СтранаПроисхождения</i><i class="tg">&gt;</i><i class="d">''</i><i class="tg">&lt;/СтранаПроисхождения</i><i class="tg">&gt;</i></span></div>
<div class="ln" style="top:465.75px"><span class="tx">            <i class="tg">&lt;ТаблДок_Описание</i> <i class="a">Данные</i><i class="eq">=</i><i class="v">"Название"</i><i class="tg">&gt;</i><i class="d">[ТаблДок].Содержание</i><i class="tg">&lt;/ТаблДок_Описание</i><i class="tg">&gt;</i></span></div>
<div class="ln" style="top:477.00px"><span class="tx">            <i class="tg">&lt;ТаблДок_Цена</i> <i class="a">Данные</i><i class="eq">=</i><i class="v">"Цена"</i><i class="tg">&gt;</i><i class="d">[ТаблДок].Цена</i><i class="tg">&lt;/ТаблДок_Цена</i><i class="tg">&gt;</i></span></div>
<div class="ln" style="top:488.25px"><span class="tx">            <i class="tg">&lt;ТаблДок_Кол_во</i> <i class="a">Данные</i><i class="eq">=</i><i class="v">"Кол_во"</i><i class="tg">&gt;</i><i class="d">[ТаблДок].Количество</i><i class="tg">&lt;/ТаблДок_Кол_во</i><i class="tg">&gt;</i></span></div>
<div class="ln" style="top:499.50px"><span class="tx">            <i class="tg">&lt;ТаблДок_Сумма</i> <i class="a">Данные</i><i class="eq">=</i><i class="v">"СуммаБезНал"</i><i class="tg">&gt;</i><i class="d">[ТаблДок].Сумма</i><i class="tg">&lt;/ТаблДок_Сумма</i><i class="tg">&gt;</i></span></div>
<div class="ln" style="top:510.75px"><span class="tx">            <i class="tg">&lt;ТаблДок_СуммаСНДС</i> <i class="a">Данные</i><i class="eq">=</i><i class="v">"Сумма"</i><i class="tg">&gt;</i><i class="d">[ТаблДок].СуммаСНДС</i><i class="tg">&lt;/ТаблДок_СуммаСНДС</i><i class="tg">&gt;</i></span></div>
<div class="ln" style="top:522.00px"><span class="tx">            <i class="tg">&lt;ТаблДок_НомерТД</i><i class="tg">&gt;</i><i class="d">''</i><i class="tg">&lt;/ТаблДок_НомерТД</i><i class="tg">&gt;</i></span></div>
<div class="ln" style="top:533.25px"><span class="tx">            <i class="tg">&lt;ТаблДок_Страна</i><i class="tg">&gt;</i><i class="d">[СтранаПроисхождения].Код</i><i class="tg">&lt;/ТаблДок_Страна</i><i class="tg">&gt;</i></span></div>
<div class="ln" style="top:544.50px"><span class="tx">            <i class="tg">&lt;СуммаНДС</i> <i class="a">Данные</i><i class="eq">=</i><i class="v">"НДС.Сумма"</i><i class="tg">&gt;</i><i class="d">[ТаблДок].СуммаНДС</i><i class="tg">&lt;/СуммаНДС</i><i class="tg">&gt;</i></span></div>
<div class="ln" style="top:555.75px"><span class="tx">            <i class="tg">&lt;СтавкаНДС</i> <i class="a">Данные</i><i class="eq">=</i><i class="v">"НДС.Ставка"</i> <i class="a">Вычислить</i><i class="eq">=</i><i class="v">"(ЗаполнитьСтавкуНДС())"</i><i class="tg">&gt;</i><i class="d">[ТаблДок].СтавкаНДС</i><i class="tg">&lt;/СтавкаНДС</i><i class="tg">&gt;</i></span></div>
<div class="ln" style="top:567.00px"><span class="tx">        <i class="tg">&lt;/мТаблДок</i><i class="tg">&gt;</i></span></div>
<div class="ln" style="top:578.25px"><span class="tx">    <i class="tg">&lt;/мДокумент</i><i class="tg">&gt;</i></span></div>
<div class="ln" style="top:589.50px"><span class="tx"><i class="tg">&lt;/имя</i><i class="tg">&gt;</i></span></div>
<div class="abs" style="left:330.4px;top:398.25px;width:1.6px;height:11.25px;background:#8a50ff;z-index:3"></div>
</div>
</div>
<!-- status -->
<div id="status">
<div class="t st" style="left:2px">eXtensible Markup Language file</div>
<div class="sd" style="left:644px"></div>
<div class="t st" style="left:648px">length : 4 720</div>
<div class="t st" style="left:709.5px">lines : 47</div>
<div class="sd" style="left:794px"></div>
<div class="t st" style="left:798px">Ln : 30</div>
<div class="t st" style="left:832.5px">Col : 55</div>
<div class="t st" style="left:870.5px">Sel : 0 | 0</div>
<div class="sd" style="left:990px"></div>
<div class="t st" style="left:993px">Windows (CR LF)</div>
<div class="sd" style="left:1072px"></div>
<div class="t st" style="left:1076px">UTF-8-BOM</div>
<div class="sd" style="left:1162px"></div>
<div class="t st" style="left:1165.5px">INS</div>
<div class="sd" style="left:1184px"></div>
</div>
<!-- taskbar -->
<div id="task">
<!--TASK-->
<svg class="abs" style="left:0;top:0" width="1200" height="31" viewBox="0 644.5 1200 30.5">
<!-- windows logo -->
<g fill="#ffffff">
<path d="M11.7 655.1 L17.2 654.3 V659.4 H11.7 Z"/>
<path d="M17.9 654.2 L24.2 653.3 V659.4 H17.9 Z"/>
<path d="M11.7 660.1 H17.2 V665.2 L11.7 664.4 Z"/>
<path d="M17.9 660.1 H24.2 V666.1 L17.9 665.2 Z"/>
</g>
<!-- search -->
<circle cx="56" cy="656.6" r="3.9" fill="none" stroke="#fff" stroke-width="1.1"/>
<path d="M53.2 659.5 L48 664.8" stroke="#fff" stroke-width="1.2"/>
<!-- task view -->
<rect x="84.5" y="655" width="11" height="10" fill="none" stroke="#fff" stroke-width="1.1" rx="0.8"/>
<path d="M82.2 656.5 V663.5 M97.8 656.5 V663.5" stroke="#fff" stroke-width="1.1"/>
<!-- IE -->
<circle cx="128.2" cy="659.5" r="6.5" fill="#1ba1e2"/>
<circle cx="128.2" cy="659.5" r="3.6" fill="#101010"/>
<rect x="124" y="658.4" width="9" height="2" fill="#1ba1e2"/>
<rect x="128.5" y="660.6" width="5" height="1.8" fill="#101010"/>
<path d="M120 666.5 C117 661 127 651 136 652.5 C138 653 137.5 656 135 657" fill="none" stroke="#f4c20d" stroke-width="1.2"/>
<!-- folder -->
<path d="M156.3 654.5 H160.5 L162 656 H166.8 V667.5 L160.5 666 H156.3 Z" fill="#f2cd6a"/>
<path d="M156.3 656.5 H162.5 V668.3 L156.3 667 Z" fill="#e8b84a"/>
<!-- compass app -->
<rect x="275.3" y="651.3" width="16.5" height="16.5" rx="1.5" fill="#e6d335"/>
<path d="M277 666.5 L290 666.5 L290 660 Z" fill="#8fc44a"/>
<path d="M283.5 653 L278.5 666 M283.5 653 L288.5 666" stroke="#333" stroke-width="1.1"/>
<circle cx="283.5" cy="653.5" r="1.2" fill="#333"/>
<!-- 1C -->
<circle cx="403.7" cy="659.5" r="8.5" fill="#f5b829"/>
<circle cx="403.7" cy="659.5" r="7" fill="#fde27a"/>
<text x="397.2" y="663.2" font-family="Liberation Sans" font-weight="bold" font-size="9.5" fill="#d42020">1С</text>
<!-- active button -->
<rect x="509" y="644.5" width="119" height="30.5" fill="#3a3a3a"/>
<!-- npp icon -->
<rect x="515.8" y="651.5" width="13" height="15.5" rx="1" fill="#f0f0f0" stroke="#a0a0a0" stroke-width="0.8"/>
<rect x="517" y="659" width="10.8" height="7" fill="#5fc33b"/>
<rect x="517.5" y="655" width="4" height="3" fill="#666"/>
<path d="M521 664 L532.5 651.5" stroke="#f0a81c" stroke-width="2.1"/>
<path d="M531.5 652.5 L533 650.8" stroke="#c0392b" stroke-width="2"/>
<!-- underlines -->
<g fill="#76b9ed">
<rect x="149.8" y="673" width="114.2" height="2"/>
<rect x="271" y="673" width="113.4" height="2"/>
<rect x="390.4" y="673" width="114.2" height="2"/>
</g>
<rect x="509" y="673" width="119" height="2" fill="#99c9ef"/>
<!-- tray -->
<path d="M1070.3 662.3 L1074.8 657.8 L1079.3 662.3" fill="none" stroke="#fff" stroke-width="1.1"/>
<rect x="1089" y="656" width="9.5" height="7" fill="none" stroke="#fff" stroke-width="1"/>
<path d="M1093.5 663 V665.5 M1090.5 665.6 H1096.5" stroke="#fff" stroke-width="1"/>
<path d="M1086.5 655.3 H1089.5 M1086.5 657.5 H1088.5 M1086.2 655 V660" stroke="#fff" stroke-width="0.9"/>
<path d="M1104.8 658.3 H1106.8 L1109.5 655.8 V664.6 L1106.8 662.2 H1104.8 Z" fill="none" stroke="#fff" stroke-width="1"/>
<path d="M1111.3 658 Q1112.5 660.2 1111.3 662.4 M1113.5 656.8 Q1115.3 660.2 1113.5 663.6 M1115.7 655.6 Q1118 660.2 1115.7 664.8" fill="none" stroke="#fff" stroke-width="0.9"/>
<rect x="1196" y="644.5" width="1" height="30.5" fill="#5a5a5a"/>
</svg>
<div class="t tt" style="left:175.8px;top:14.8px;font-size:9.2px;transform:scaleX(0.975);transform-origin:0 0">ЗагрузкаСчетов28</div>
<div class="t tt" style="left:296px;top:14.8px;font-size:9.2px;transform:scaleX(0.94);transform-origin:0 0">Обработка СТ_СБ...</div>
<div class="t tt" style="left:415.8px;top:14.8px;font-size:9.2px;transform:scaleX(0.922);transform-origin:0 0">ERP / 1C:ERP Упра...</div>
<div class="t tt" style="left:537px;top:14.8px;font-size:9.2px;transform:scaleX(1.04);transform-origin:0 0">*\\msk-dev-11\Bit_...</div>
<div class="t tt" style="left:1125px;top:14.8px;font-size:9.2px">РУС</div>
<div class="t tt" style="left:1161px;top:8.3px;font-size:9.2px;transform:scaleX(0.95);transform-origin:0 0">12:36</div>
<div class="t tt" style="left:1151px;top:21.6px;font-size:9.2px;transform:scaleX(0.955);transform-origin:0 0">25.07.2019</div>
<!--/TASK-->
</div>
</body></html>
